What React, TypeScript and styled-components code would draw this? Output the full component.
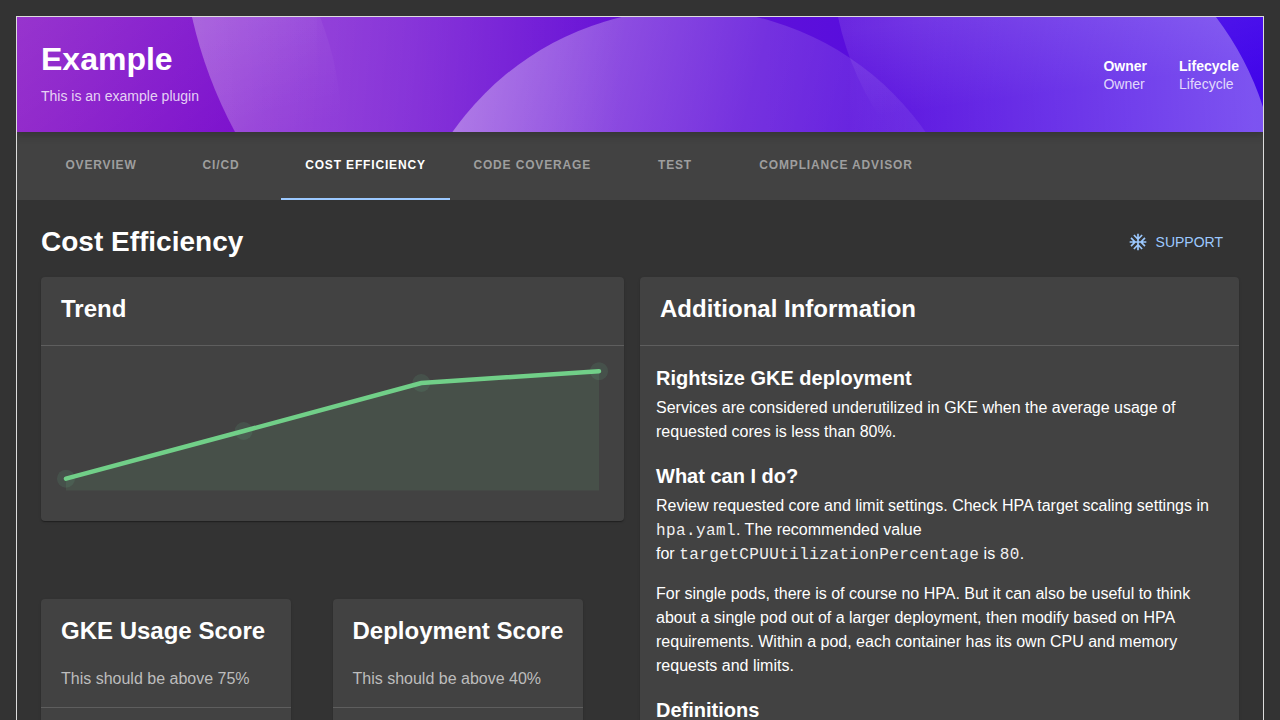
import React from 'react';
import styled, { createGlobalStyle } from 'styled-components';

const GlobalStyle = createGlobalStyle`
  * { box-sizing: border-box; }
  html, body { margin: 0; height: 100%; overflow: hidden; }
  body {
    background: #333;
    color: #fff;
    font-family: "Liberation Sans", Arial, sans-serif;
  }
`;

const Frame = styled.div`
  margin: 16px 16px 0;
  height: 704px;
  overflow: hidden;
  border: 1px solid #ddd;
  border-bottom: 0;
`;

const Header = styled.header`
  position: relative;
  z-index: 2;
  height: 115px;
  padding: 0 24px;
  display: flex;
  align-items: center;
  justify-content: space-between;
  background: #6512d8;
  box-shadow: 0 0 8px 3px rgba(20, 20, 20, 0.3);
  clip-path: inset(0 0 -20px 0);
`;

const Wave = styled.svg`
  position: absolute;
  inset: 0;
  width: 100%;
  height: 100%;
`;

const HeaderText = styled.div`
  position: relative;
  padding-bottom: 4px;
`;

const Title = styled.h1`
  margin: 0 0 8px;
  font-size: 32px;
  line-height: 38px;
  font-weight: 700;
`;

const Subtitle = styled.p`
  margin: 0;
  font-size: 14px;
  line-height: 20px;
  color: rgba(255, 255, 255, 0.8);
`;

const Labels = styled.div`
  position: relative;
  display: flex;
  gap: 32px;
  font-size: 14px;
  line-height: 18px;
`;

const LabelName = styled.div`
  font-weight: 700;
`;

const LabelValue = styled.div`
  color: rgba(255, 255, 255, 0.8);
`;

const Tabs = styled.nav`
  display: flex;
  height: 68px;
  padding-left: 24px;
  background: #424242;
`;

const Tab = styled.div<{ $active?: boolean; $width: number }>`
  width: ${p => p.$width}px;
  height: 68px;
  padding-bottom: 2px;
  display: flex;
  align-items: center;
  justify-content: center;
  font-size: 12px;
  font-weight: 700;
  letter-spacing: 0.84px;
  white-space: nowrap;
  color: ${p => (p.$active ? '#fff' : '#9e9e9e')};
  box-shadow: ${p => (p.$active ? 'inset 0 -2px #9cc9ff' : 'none')};
`;

const Content = styled.main`
  padding: 24px 24px 0;
`;

const ContentHeader = styled.div`
  display: flex;
  align-items: center;
  justify-content: space-between;
  height: 36px;
  margin-bottom: 17px;
`;

const PageTitle = styled.h2`
  margin: 0;
  font-size: 28px;
  line-height: 36px;
`;

const Support = styled.button`
  display: flex;
  align-items: center;
  gap: 8px;
  padding: 6px 16px;
  border: 0;
  background: none;
  color: #9cc9ff;
  font: 14px/24px "Liberation Sans", Arial, sans-serif;
`;

const Columns = styled.div`
  display: grid;
  grid-template-columns: 583px 599px;
  gap: 16px;
  align-items: start;
`;

const Card = styled.section`
  background: #424242;
  border-radius: 4px;
  box-shadow: 0 2px 1px -1px rgba(0, 0, 0, 0.2), 0 1px 1px rgba(0, 0, 0, 0.14),
    0 1px 3px rgba(0, 0, 0, 0.12);
`;

const CardHead = styled.div`
  padding: 16px 20px 20px;
  border-bottom: 1px solid #5e5e5e;
`;

const CardTitle = styled.h3`
  margin: 0;
  font-size: 24px;
  line-height: 32px;
  white-space: nowrap;
`;

const CardSub = styled.p`
  margin: 21px 0 -3px;
  font-size: 16px;
  line-height: 22px;
  color: #bdbdbd;
`;

const Chart = styled.svg`
  display: block;
  width: 583px;
  height: 175px;
`;

const Scores = styled.div`
  display: flex;
  gap: 41.5px;
  margin-top: 78px;
`;

const ScoreCard = styled(Card)`
  width: 250px;
  height: 300px;
`;

const Info = styled.div`
  padding: 16px;
  height: 600px;
`;

const InfoTitle = styled.h4`
  margin: 0 0 1px;
  font-size: 20px;
  line-height: 33px;
`;

const Text = styled.p`
  margin: 0 0 16px;
  font-size: 16px;
  line-height: 24px;
`;

const Code = styled.code`
  font-family: "Liberation Mono", monospace;
  font-size: 16px;
  line-height: 1;
  letter-spacing: 0.4px;
  color: #f0f0f0;
`;

const tabs = [
  { label: 'OVERVIEW', width: 120 },
  { label: 'CI/CD', width: 120 },
  { label: 'COST EFFICIENCY', width: 169 },
  { label: 'CODE COVERAGE', width: 164.5 },
  { label: 'TEST', width: 121 },
  { label: 'COMPLIANCE ADVISOR', width: 201 },
];

const points: [number, number][] = [[25, 132.7], [202.7, 85], [380.3, 37], [558, 25.2]];

function HeaderWave() {
  return (
    <Wave viewBox="17 17 1246 115" preserveAspectRatio="none">
      <defs>
        <linearGradient id="base" gradientUnits="userSpaceOnUse" x1="17" y1="0" x2="1263" y2="0">
          <stop offset="0" stopColor="#8c1ec8" />
          <stop offset="0.18" stopColor="#7c12ce" />
          <stop offset="0.6" stopColor="#5e10da" />
          <stop offset="1" stopColor="#3f02ea" />
        </linearGradient>
        <linearGradient id="corner" gradientUnits="userSpaceOnUse" x1="17" y1="17" x2="160" y2="200">
          <stop offset="0" stopColor="#fff" stopOpacity="0.1" />
          <stop offset="1" stopColor="#fff" stopOpacity="0" />
        </linearGradient>
        <linearGradient id="left" gradientUnits="userSpaceOnUse" x1="195" y1="60" x2="620" y2="100">
          <stop offset="0" stopColor="#fff" stopOpacity="0.26" />
          <stop offset="0.5" stopColor="#fff" stopOpacity="0.15" />
          <stop offset="1" stopColor="#fff" stopOpacity="0" />
        </linearGradient>
        <linearGradient id="inner" gradientUnits="userSpaceOnUse" x1="250" y1="17" x2="280" y2="135">
          <stop offset="0" stopColor="#fff" stopOpacity="0.06" />
          <stop offset="1" stopColor="#fff" stopOpacity="0" />
        </linearGradient>
        <linearGradient id="mid" gradientUnits="userSpaceOnUse" x1="470" y1="80" x2="900" y2="190">
          <stop offset="0" stopColor="#fff" stopOpacity="0.36" />
          <stop offset="0.62" stopColor="#fff" stopOpacity="0.14" />
          <stop offset="1" stopColor="#fff" stopOpacity="0.07" />
        </linearGradient>
        <linearGradient id="upper" gradientUnits="userSpaceOnUse" x1="950" y1="17" x2="962" y2="105">
          <stop offset="0" stopColor="#fff" stopOpacity="0.1" />
          <stop offset="1" stopColor="#fff" stopOpacity="0" />
        </linearGradient>
        <linearGradient id="right" gradientUnits="userSpaceOnUse" x1="840" y1="100" x2="1250" y2="70">
          <stop offset="0" stopColor="#fff" stopOpacity="0" />
          <stop offset="0.2" stopColor="#fff" stopOpacity="0.08" />
          <stop offset="1" stopColor="#fff" stopOpacity="0.32" />
        </linearGradient>
        <linearGradient id="edge" gradientUnits="userSpaceOnUse" x1="1230" y1="17" x2="1250" y2="100">
          <stop offset="0" stopColor="#fff" stopOpacity="0.06" />
          <stop offset="1" stopColor="#fff" stopOpacity="0" />
        </linearGradient>
      </defs>
      <rect x="17" y="17" width="1246" height="115" fill="url(#base)" />
      <rect x="17" y="17" width="300" height="115" fill="url(#corner)" />
      <path d="M192 17 A455 455 0 0 0 235 132 H700 V17 Z" fill="url(#left)" />
      <path d="M192 17 A455 455 0 0 0 235 132 H341 A300 300 0 0 0 320 17 Z" fill="url(#inner)" />
      <circle cx="689" cy="298" r="289" fill="url(#mid)" />
      <path d="M838 17 A300 300 0 0 0 890 132 H1270 A307 307 0 0 0 1216 17 Z" fill="url(#upper)" />
      <path d="M838 17 A300 300 0 0 0 850 60 V132 H1270 A307 307 0 0 0 1216 17 Z" fill="url(#right)" />
      <path d="M1216 17 A307 307 0 0 1 1263 108 V17 Z" fill="url(#edge)" />
    </Wave>
  );
}

function TrendChart() {
  const line = points.map(p => p.join(',')).join(' ');
  return (
    <Chart viewBox="0 0 583 175">
      <polygon points={`25,144.5 ${line} 558,144.5`} fill="#71cf88" fillOpacity="0.1" />
      {points.map(([x, y]) => (
        <circle key={x} cx={x} cy={y} r="9" fill="#71cf98" fillOpacity="0.11" />
      ))}
      <polyline points={line} fill="none" stroke="#71cf88" strokeWidth="4.5" strokeLinecap="round" />
    </Chart>
  );
}

export default function App() {
  return (
    <>
      <GlobalStyle />
      <Frame>
        <Header>
          <HeaderWave />
          <HeaderText>
            <Title>Example</Title>
            <Subtitle>This is an example plugin</Subtitle>
          </HeaderText>
          <Labels>
            <div>
              <LabelName>Owner</LabelName>
              <LabelValue>Owner</LabelValue>
            </div>
            <div>
              <LabelName>Lifecycle</LabelName>
              <LabelValue>Lifecycle</LabelValue>
            </div>
          </Labels>
        </Header>
        <Tabs>
          {tabs.map(t => (
            <Tab key={t.label} $width={t.width} $active={t.label === 'COST EFFICIENCY'}>
              {t.label}
            </Tab>
          ))}
        </Tabs>
        <Content>
          <ContentHeader>
            <PageTitle>Cost Efficiency</PageTitle>
            <Support>
              <svg width="20" height="20" viewBox="0 0 24 24" fill="currentColor">
                <path d="M22 11h-4.17l3.24-3.24-1.41-1.42L15 11h-2V9l4.66-4.66-1.42-1.41L13 6.17V2h-2v4.17L7.76 2.93 6.34 4.34 11 9v2H9L4.34 6.34 2.93 7.76 6.17 11H2v2h4.17l-3.24 3.24 1.41 1.42L9 13h2v2l-4.66 4.66 1.42 1.41L11 17.83V22h2v-4.17l3.24 3.24 1.42-1.41L13 15v-2h2l4.66 4.66 1.41-1.42L17.83 13H22z" />
              </svg>
              SUPPORT
            </Support>
          </ContentHeader>
          <Columns>
            <div>
              <Card>
                <CardHead>
                  <CardTitle>Trend</CardTitle>
                </CardHead>
                <TrendChart />
              </Card>
              <Scores>
                <ScoreCard>
                  <CardHead>
                    <CardTitle>GKE Usage Score</CardTitle>
                    <CardSub>This should be above 75%</CardSub>
                  </CardHead>
                </ScoreCard>
                <ScoreCard>
                  <CardHead>
                    <CardTitle>Deployment Score</CardTitle>
                    <CardSub>This should be above 40%</CardSub>
                  </CardHead>
                </ScoreCard>
              </Scores>
            </div>
            <Card>
              <CardHead>
                <CardTitle>Additional Information</CardTitle>
              </CardHead>
              <Info>
                <InfoTitle>Rightsize GKE deployment</InfoTitle>
                <Text>
                  Services are considered underutilized in GKE when the average usage of
                  requested cores is less than 80%.
                </Text>
                <InfoTitle>What can I do?</InfoTitle>
                <Text>
                  Review requested core and limit settings. Check HPA target scaling settings
                  in <Code>hpa.yaml</Code>. The recommended value
                  <br />
                  for <Code>targetCPUUtilizationPercentage</Code> is <Code>80</Code>.
                </Text>
                <Text>
                  For single pods, there is of course no HPA. But it can also be useful to think
                  about a single pod out of a larger deployment, then modify based on HPA
                  requirements. Within a pod, each container has its own CPU and memory
                  requests and limits.
                </Text>
                <InfoTitle>Definitions</InfoTitle>
              </Info>
            </Card>
          </Columns>
        </Content>
      </Frame>
    </>
  );
}
